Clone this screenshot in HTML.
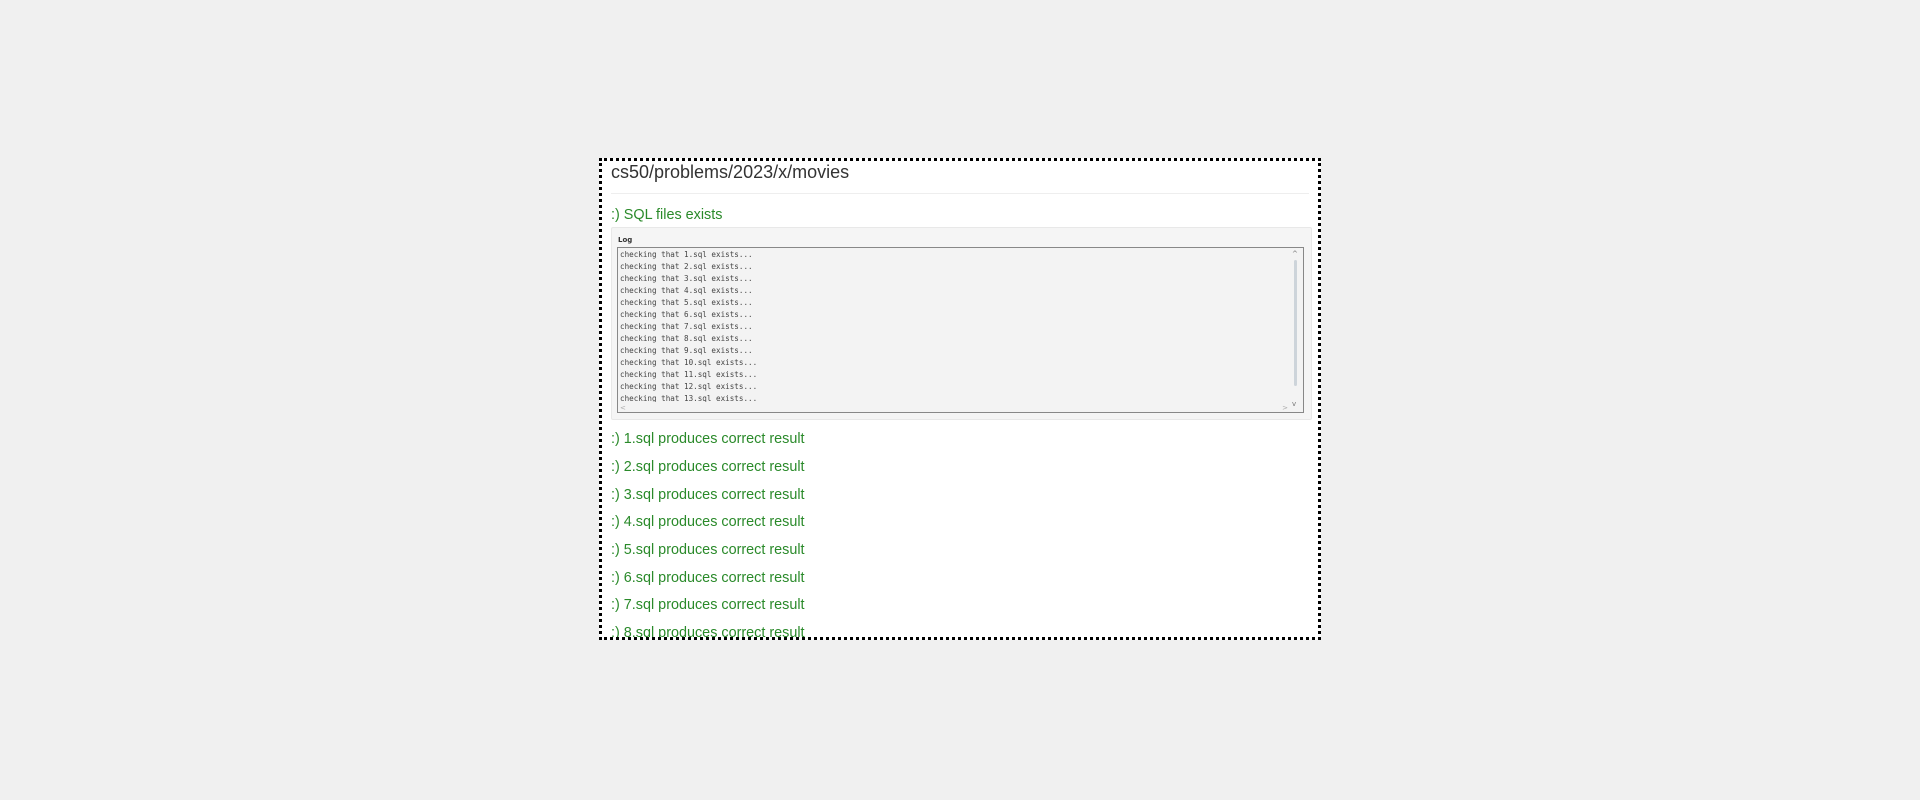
<!DOCTYPE html>
<html><head><meta charset="utf-8"><style>
html,body{margin:0;padding:0;background:#f0f0f0;width:1920px;height:800px;overflow:hidden;font-family:"Liberation Sans",Arial,sans-serif}
#box{position:absolute;left:599px;top:158px;width:716px;height:476px;border:3px dotted #000;background:#fff;overflow:hidden}
.t{position:absolute;left:9px;white-space:nowrap}
h1{position:absolute;left:9px;top:1px;margin:0;font-weight:normal;font-size:18px;color:#333}
.hr{position:absolute;left:9px;right:9px;top:32px;height:1px;background:#eee}
.g{color:#2a8a2a;font-size:14.4px}
#log{position:absolute;left:9px;top:66px;width:699px;height:191px;background:#f5f5f5;border:1px solid #e8e8e8;border-radius:2px}
#lbl{position:absolute;left:6px;top:8px;font-size:7px;font-weight:bold;color:#333;font-family:"DejaVu Sans",sans-serif}
#pre{position:absolute;left:5px;top:19px;width:685px;height:164px;border:1px solid #888;background:#f3f3f3;overflow:hidden}
#pre div{font-family:"DejaVu Sans Mono","Liberation Mono",monospace;font-size:7.6px;line-height:12px;color:#444;padding-left:2px;white-space:pre}
#vs{position:absolute;right:0;top:0;width:11px;height:164px;background:#f3f3f3}
#vs i{position:absolute;left:4px;top:12px;width:3px;height:126px;background:#cdd4da;border-radius:2px}
#vs b{position:absolute;left:2px;font-size:7px;color:#777;font-weight:normal;font-family:"DejaVu Sans",sans-serif}
#hs{position:absolute;left:0;bottom:0;width:674px;height:10px;background:#f3f3f3}
#hs b{position:absolute;top:0;font-size:7px;color:#aaa;font-weight:normal;font-family:"DejaVu Sans",sans-serif}
</style></head><body>
<div id="box">
<h1>cs50/problems/2023/x/movies</h1>
<div class="hr"></div>
<div class="t g" style="top:46px">:) SQL files exists</div>
<div id="log"><div id="lbl">Log</div>
<div id="pre">
<div style="padding-top:1px">checking that 1.sql exists...
checking that 2.sql exists...
checking that 3.sql exists...
checking that 4.sql exists...
checking that 5.sql exists...
checking that 6.sql exists...
checking that 7.sql exists...
checking that 8.sql exists...
checking that 9.sql exists...
checking that 10.sql exists...
checking that 11.sql exists...
checking that 12.sql exists...
checking that 13.sql exists...</div>
<div id="hs"><b style="left:2px">&lt;</b><b style="right:6px">&gt;</b></div>
<div id="vs"><b style="top:0">^</b><i></i><b style="top:150px">v</b></div>
</div></div>
<div class="t g" style="top:270px">:) 1.sql produces correct result</div>
<div class="t g" style="top:298px">:) 2.sql produces correct result</div>
<div class="t g" style="top:326px">:) 3.sql produces correct result</div>
<div class="t g" style="top:353px">:) 4.sql produces correct result</div>
<div class="t g" style="top:381px">:) 5.sql produces correct result</div>
<div class="t g" style="top:409px">:) 6.sql produces correct result</div>
<div class="t g" style="top:436px">:) 7.sql produces correct result</div>
<div class="t g" style="top:464px">:) 8.sql produces correct result</div>
</div>
</body></html>
